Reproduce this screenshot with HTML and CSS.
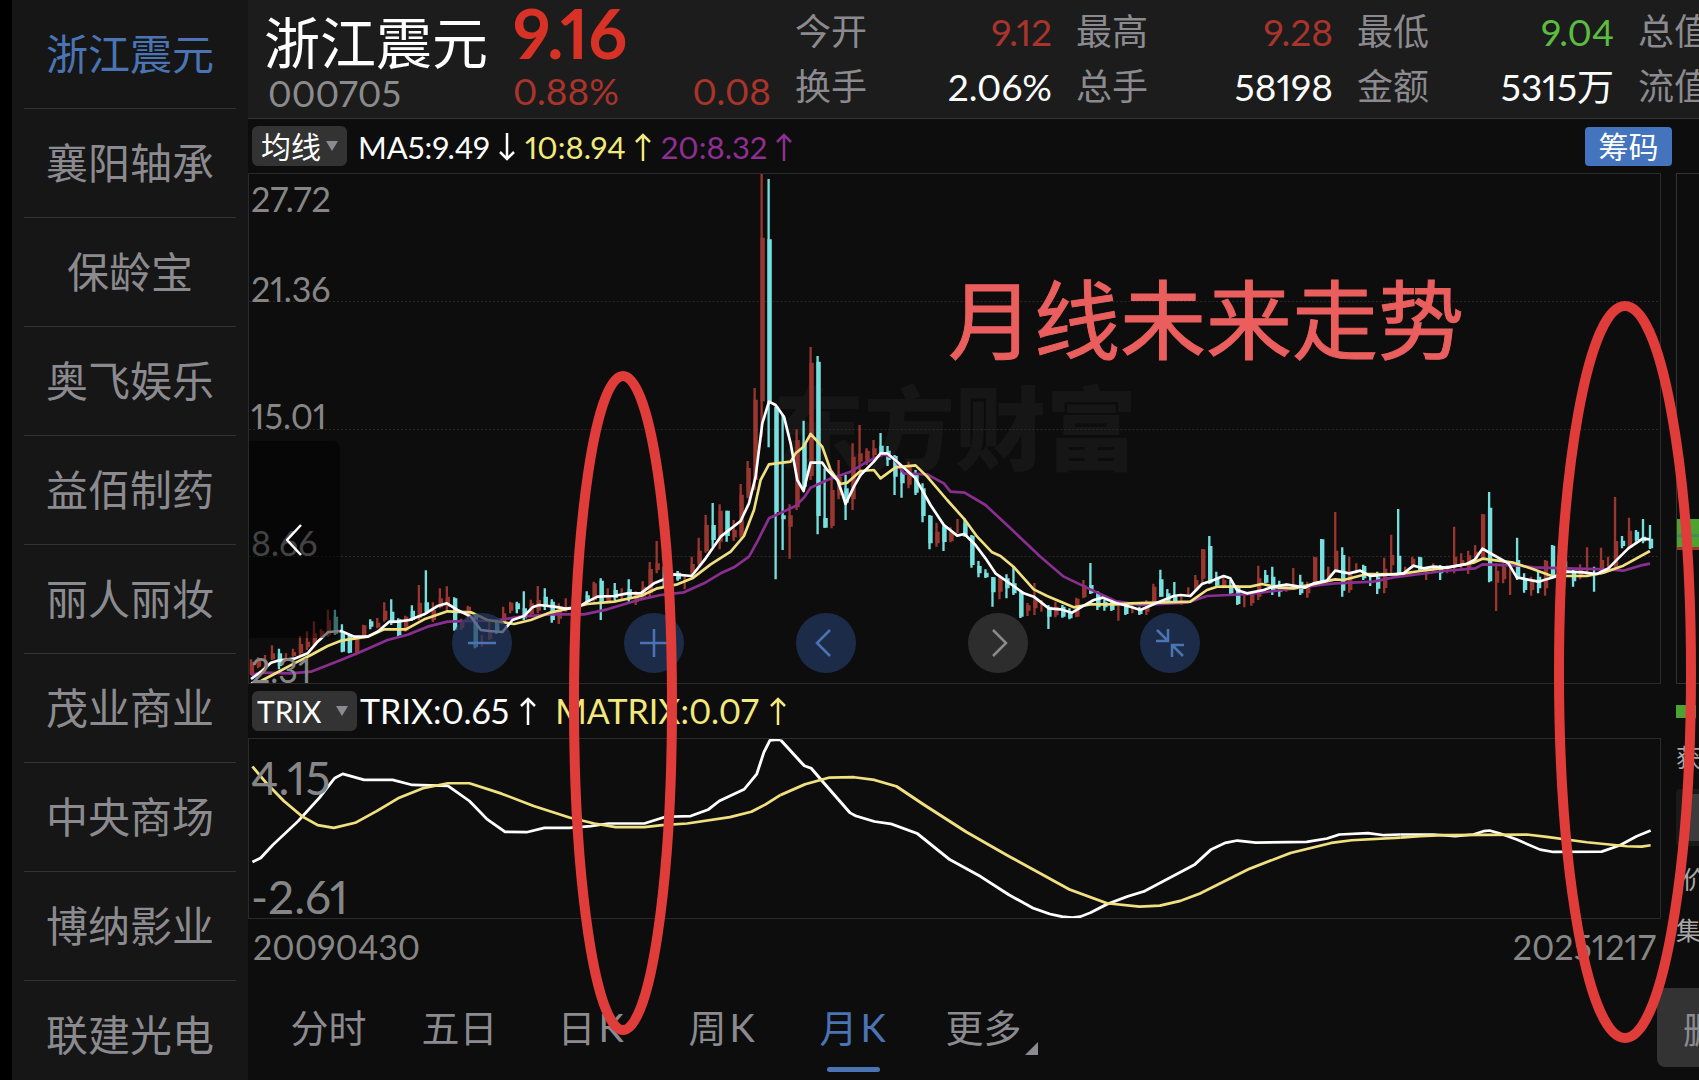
FILE: index.html
```html
<!DOCTYPE html>
<html lang="zh-CN">
<head>
<meta charset="utf-8">
<meta name="viewport" content="width=device-width, initial-scale=1">
<title>浙江震元 000705</title>
<link rel="stylesheet" href="styles.css">
</head>
<body>
<nav class="watchlist" aria-label="自选股">
  <a class="stock stock-active" href="#">浙江震元</a>
  <a class="stock" href="#">襄阳轴承</a>
  <a class="stock" href="#">保龄宝</a>
  <a class="stock" href="#">奥飞娱乐</a>
  <a class="stock" href="#">益佰制药</a>
  <a class="stock" href="#">丽人丽妆</a>
  <a class="stock" href="#">茂业商业</a>
  <a class="stock" href="#">中央商场</a>
  <a class="stock" href="#">博纳影业</a>
  <a class="stock" href="#">联建光电</a>
</nav>

<main class="quote">
  <header class="summary">
    <div class="ident">
      <h1 class="name">浙江震元</h1>
      <div class="code">000705</div>
    </div>
    <div class="price">
      <div class="last">9.16</div>
      <div class="change"><span>0.88%</span><span>0.08</span></div>
    </div>
    <dl class="stats">
      <div class="stat"><dt>今开</dt><dd class="up">9.12</dd></div>
      <div class="stat"><dt>最高</dt><dd class="up">9.28</dd></div>
      <div class="stat"><dt>最低</dt><dd class="down">9.04</dd></div>
      <div class="stat"><dt>总值</dt><dd></dd></div>
      <div class="stat"><dt>换手</dt><dd>2.06%</dd></div>
      <div class="stat"><dt>总手</dt><dd>58198</dd></div>
      <div class="stat"><dt>金额</dt><dd>5315万</dd></div>
      <div class="stat"><dt>流值</dt><dd></dd></div>
    </dl>
  </header>

  <div class="board">
    <section class="charts">
      <div class="legend">
        <label class="picker"><select class="picker-select picker-ma" aria-label="主图指标"><option>均线</option></select></label>
        <span class="reading white ma-first">MA5:9.49<svg class="arrow" viewBox="0 0 16 28"><path d="M8 0V26M1 19L8 26L15 19"/></svg></span>
        <span class="reading yellow">10:8.94<svg class="arrow" viewBox="0 0 16 28"><path d="M8 28V2M1 9L8 2L15 9"/></svg></span>
        <span class="reading purple">20:8.32<svg class="arrow" viewBox="0 0 16 28"><path d="M8 28V2M1 9L8 2L15 9"/></svg></span>
        <button class="chips" type="button">筹码</button>
      </div>

      <div class="plot plot-price">
        <div class="watermark">东方财富</div>
        <svg class="series" viewBox="248 174 1412 509" preserveAspectRatio="none" aria-hidden="true">
          <path class="grid" d="M248 301.5H1660M248 429.5H1660M248 556.5H1660"/>
          <g transform="translate(240 420) scale(.33333)">
            <path class="wick red" d="M30 718V765M51 712V745M72 705V750M93 676V720M135 700V720M156 686V710M177 648V705M198 634V690M219 604V680M240 628V660M261 569V650M346 650V706M367 614V655M409 594V625M430 547V605M493 587V635M534 495V600M576 547V606M597 505V565M618 499V575M661 596V630M681 557V600M723 645V680M745 605V660M787 560V610M808 545V580M870 539V590M891 498V580M954 550V612M975 535V575M1017 530V560M1059 485V545M1101 505V550M1143 505V540M1185 514V555M1206 484V535M1227 426V530M1248 363V460"/>
            <path class="body red" d="M33 725V762M54 722V740M96 700V718M159 696V708M180 672V700M201 665V682M222 640V676M243 632V646M264 600V646M349 655V702M370 616V652M412 608V622M433 572V600M496 590V632M537 548V594M579 570V600M600 535V562M621 530V560M664 600V624M684 560V590M748 630V656M790 580V608M811 548V572M873 550V582M894 540V572M957 570V596M1062 490V540M1104 525V546M1188 520V546M1209 500V530M1230 447V520M1251 430V450"/>
            <path class="wick cyan" d="M114 686V748M282 569V645M303 613V697M324 645V700M388 598V628M451 538V615M472 595V648M513 556V603M555 451V578M640 532V632M702 585V685M766 604V642M828 545V580M849 514V600M912 505V570M933 538V608M1038 514V550M1080 475V600M1122 489V540M1164 478V545M1269 440V500M1311 453V480"/>
            <path class="body cyan" d="M117 700V738M285 590V642M306 640V695M327 645V698M391 604V620M454 575V610M475 598V645M516 572V600M558 547V574M643 535V630M705 588V682M769 610V636M831 550V568M852 565V595M915 530V560M936 545V600M1041 526V546M1083 482V552M1125 510V534M1167 508V534M1314 458V474"/>
          </g>
          <g transform="translate(660 160) scale(.33333)">
            <path class="wick red" d="M72 1245V1288M93 1190V1245M114 1133V1215M135 1065V1178M177 1033V1168M219 1080V1143M240 972V1135M261 903V1015M282 684V990M303 42V830M387 1033V1196M408 808V1050M450 561V960M513 946V1105M534 900V1018M576 850V1050M597 795V930M618 865V915M639 840V900M744 905V985M828 1088V1160M870 1102V1147M891 1077V1120"/>
            <path class="body red" d="M96 1212V1240M117 1172V1210M138 1095V1174M180 1052V1145M222 1110V1132M243 1004V1128M264 924V1005M285 719V960M306 233V724M390 1066V1100M411 840V1042M453 608V948M516 990V1098M537 950V1006M579 890V1018M600 880V905M621 872V900M642 865V885M747 920V974M831 1115V1150M873 1118V1144"/>
            <path class="wick cyan" d="M51 1233V1262M156 1029V1160M198 1052V1145M324 57V862M345 740V1258M366 765V1170M429 782V990M471 588V1123M492 925V1103M555 945V1080M660 819V885M681 858V918M702 885V1005M723 925V1013M765 930V1005M786 970V1087M807 1065V1168M849 1095V1173M912 1075V1130M933 1125V1223M954 1203V1252M975 1228V1254"/>
            <path class="body cyan" d="M54 1240V1258M159 1095V1140M201 1052V1128M327 238V726M348 740V1056M369 1066V1078M432 850V980M474 605V1068M495 1074V1103M558 985V1028M663 857V880M684 872V900M705 888V950M726 940V970M768 945V998M789 985V1068M810 1067V1150M852 1100V1146M915 1090V1128M936 1127V1215M957 1218V1240M978 1238V1252"/>
          </g>
          <g transform="translate(940 420) scale(.33333)">
            <path class="wick red" d="M177 465V538M261 549V588M282 489V585M303 540V575M345 545V592M408 533V592M429 480V535M534 550V602M576 555V580M618 540V585M639 491V548M723 530V555M744 502V530M765 465V515M786 387V490M849 470V505M912 520V562M933 515V557M954 437V540M1038 490V515M1059 444V500M1101 495V533M1122 410V490M1164 440V480M1185 276V450"/>
            <path class="body red" d="M180 475V515M264 556V572M285 540V565M348 560V586M411 536V590M432 496V532M621 550V575M642 500V545M768 480V512M789 388V476M852 480V500M936 525V550M957 475V530M1125 412V488M1167 460V478M1188 392V450"/>
            <path class="wick cyan" d="M156 471V560M198 463V535M219 440V525M240 515V594M324 555V627M366 555V593M387 565V598M450 429V522M471 513V570M492 540V572M513 538V573M555 555V585M597 560V585M660 449V530M681 507V545M702 486V545M807 348V492M828 455V500M870 480V522M891 495V555M975 450V490M996 440V525M1017 482V530M1080 464V525M1143 357V485"/>
            <path class="body cyan" d="M159 472V517M201 475V505M222 490V520M243 518V590M327 560V590M369 560V590M390 575V595M453 495V520M474 520V562M495 545V562M516 545V570M558 560V582M600 565V582M663 478V530M684 520V545M705 530V545M810 378V490M831 470V495M873 495V520M894 500V552M978 465V488M999 470V510M1020 500V515M1083 485V520M1146 358V482"/>
          </g>
          <g transform="translate(1300 440) scale(.33333)">
            <path class="wick red" d="M21 425V472M84 380V425M147 350V458M168 370V400M252 353V460M273 284V400M315 380V405M336 350V385M378 385V420M399 370V395M441 375V400M462 260V400M483 340V385M504 332V402M525 315V365M546 222V360M588 370V513M609 370V430M630 375V465M693 410V467M735 360V467M777 350V400M840 373V418M861 322V405M903 323V405M924 350V385M945 171V385M987 233V325"/>
            <path class="body red" d="M24 440V460M150 402V450M255 386V444M276 345V376M339 356V380M465 350V380M486 360V378M507 346V385M528 335V360M549 223V358M591 392V428M612 380V418M696 425V450M738 362V445M843 388V412M906 360V400M948 303V380M990 272V322"/>
            <path class="wick cyan" d="M126 322V470M189 374V420M210 400V438M231 395V462M294 207V405M357 350V395M420 375V420M567 156V427M651 293V420M672 400V458M714 395V460M756 315V410M798 362V400M819 390V440M882 380V455M966 288V325M1008 270V305M1029 237V310M1050 255V327"/>
            <path class="body cyan" d="M129 345V452M192 378V415M234 412V446M297 347V402M360 352V392M423 380V400M570 203V424M654 360V410M675 420V450M717 410V445M759 317V408M822 395V424M969 302V318M1011 275V300M1032 290V304M1053 296V325"/>
          </g>
          <g transform="translate(240 420) scale(.33333)">
            <polyline class="line purple3" points="30,765 60,758 150,760 210,755 300,720 360,695 440,660 500,644 560,620 620,605 700,603 760,602 840,590 930,583 1030,583 1100,568 1200,538 1260,525 1330,517 1390,490 1440,460 1480,442 1525,410 1550,365 1585,295 1665,258 1690,233 1710,203 1760,180 1830,155 1880,125 1930,103 1960,115 1990,160 2060,163 2110,190 2130,215 2172,218 2235,255 2310,325 2400,410 2470,470 2550,508 2625,543 2700,555 2840,548 2900,528 3030,522 3180,503 3240,495 3285,490 3400,485 3460,472 3610,453 3705,445 3727,433 3840,437 3880,442 3980,445 4100,448 4150,452 4200,437 4230,431"/>
            <polyline class="line yellow3" points="30,790 60,783 100,762 160,730 210,705 260,678 300,662 380,650 430,628 495,628 550,598 620,574 690,577 740,600 820,612 870,600 930,577 980,567 1040,552 1120,545 1200,528 1250,505 1310,493 1355,475 1410,433 1470,395 1510,348 1540,270 1560,180 1585,133 1650,125 1665,100 1689,80 1710,42 1745,80 1770,150 1800,192 1820,188 1860,153 1900,150 1920,175 1965,142 2025,136 2060,170 2120,240 2172,298 2210,350 2255,397 2280,408 2319,440 2380,508 2420,528 2500,562 2550,553 2625,553 2670,550 2750,548 2850,545 2900,510 2930,500 3030,500 3065,492 3110,502 3160,505 3230,490 3285,478 3310,480 3380,462 3470,463 3540,453 3620,443 3700,428 3727,416 3820,428 3880,448 3935,468 4040,468 4090,458 4150,437 4230,393"/>
            <polyline class="line white3" points="30,777 60,755 90,728 110,722 160,716 200,700 230,665 262,636 300,633 340,650 380,650 410,635 445,605 470,605 505,600 550,583 590,558 618,550 650,570 690,590 720,630 745,633 785,636 815,600 850,588 875,562 895,555 940,560 975,566 1010,562 1040,545 1070,530 1120,528 1160,520 1200,520 1240,490 1270,478 1300,463 1353,468 1395,415 1440,350 1500,303 1525,250 1545,170 1565,10 1585,-55 1605,-45 1630,-10 1650,70 1670,180 1689,213 1710,128 1745,128 1760,150 1790,180 1805,220 1815,252 1840,200 1860,165 1900,125 1920,100 1940,100 1970,125 2025,175 2070,255 2110,315 2150,347 2172,342 2205,375 2235,415 2265,460 2315,495 2350,520 2380,530 2425,565 2460,568 2495,578 2525,560 2560,540 2587,533 2625,548 2670,560 2700,570 2750,548 2800,528 2820,525 2850,528 2885,492 2920,480 2950,468 2970,475 2990,510 3020,520 3070,510 3100,500 3140,494 3195,503 3220,490 3260,482 3285,452 3327,460 3360,452 3390,468 3430,465 3490,460 3520,437 3550,445 3580,440 3620,443 3680,432 3705,418 3727,386 3760,405 3805,430 3830,472 3895,485 3940,472 3980,455 4030,457 4070,462 4105,445 4140,410 4165,385 4208,356 4230,358"/>
          </g>
        </svg>
        <div class="scale">
          <span>27.72</span><span>21.36</span><span>15.01</span><span>8.66</span><span>2.31</span>
        </div>
        <button class="drawer" type="button" aria-label="展开"><svg viewBox="0 0 16 32"><path d="M15 1L1 16L15 31"/></svg></button>
        <div class="controls">
          <button class="round" type="button" aria-label="缩小"><svg viewBox="0 0 60 60"><path d="M16 30H44"/></svg></button>
          <button class="round" type="button" aria-label="放大"><svg viewBox="0 0 60 60"><path d="M16 30H44M30 16V44"/></svg></button>
          <button class="round" type="button" aria-label="左移"><svg viewBox="0 0 60 60"><path d="M34 17L21 30L34 43"/></svg></button>
          <button class="round round-off" type="button" aria-label="右移"><svg viewBox="0 0 60 60"><path d="M25 17L38 30L25 43"/></svg></button>
          <button class="round" type="button" aria-label="收起"><svg viewBox="0 0 60 60"><path d="M17 17L28 28M28 16V28H16M43 43L32 32M32 44V32H44"/></svg></button>
        </div>
      </div>

      <div class="legend">
        <label class="picker"><select class="picker-select picker-trix" aria-label="副图指标"><option>TRIX</option></select></label>
        <span class="reading reading-sub white">TRIX:0.65<svg class="arrow" viewBox="0 0 16 28"><path d="M8 28V2M1 9L8 2L15 9"/></svg></span>
        <span class="reading reading-sub yellow">MATRIX:0.07<svg class="arrow" viewBox="0 0 16 28"><path d="M8 28V2M1 9L8 2L15 9"/></svg></span>
      </div>

      <div class="plot plot-trix">
        <svg class="series" viewBox="248 740 1412 178" preserveAspectRatio="none" aria-hidden="true">
          <g transform="translate(240 690) scale(.35714 .33333)">
            <polyline class="line white3" points="32,517 55,505 90,465 160,395 220,325 262,267 285,254 345,272 425,272 480,287 580,290 640,335 690,390 740,427 800,428 850,415 920,415 980,410 1030,402 1130,402 1190,382 1260,380 1310,360 1340,335 1410,300 1445,255 1465,190 1482,154 1505,152 1512,153"/>
            <polyline class="line yellow3" points="32,232 70,280 120,335 170,380 215,407 260,415 320,400 380,365 440,327 510,297 580,282 640,282 730,313 820,350 920,384 990,402 1050,413 1130,413 1180,407 1250,402 1370,383 1430,367 1470,345 1512,317"/>
          </g>
          <g transform="translate(780 700) scale(.40816 .33333)">
            <polyline class="line white3" points="0,123 58,200 75,207 105,250 170,340 185,350 230,366 270,373 335,402 415,480 490,530 560,585 620,625 660,642 690,650 715,653 735,650 760,638 800,613 850,590 890,575 1015,495 1055,450 1090,430 1120,423 1165,429 1290,427 1340,417 1370,405 1440,401 1480,407 1519,405"/>
            <polyline class="line yellow3" points="0,287 60,255 120,235 180,234 230,242 285,262 350,315 455,397 560,470 710,570 800,610 880,620 930,617 980,603 1030,580 1150,507 1250,460 1350,430 1400,422 1519,414"/>
          </g>
          <g transform="translate(1400 700) scale(.33333)">
            <polyline class="line white3" points="0,405 100,405 165,410 220,405 250,395 268,393 300,402 350,420 420,450 460,457 605,456 660,437 710,410 752,393"/>
            <polyline class="line yellow3" points="0,414 60,410 130,407 380,405 440,412 560,428 680,440 725,441 752,437"/>
          </g>
        </svg>
        <div class="scale scale-trix"><span>4.15</span><span>-2.61</span></div>
      </div>

      <div class="dates"><time>20090430</time><time>20251217</time></div>
    </section>

    <aside class="distribution" aria-label="筹码分布">
      <div class="profile"><div class="band"></div></div>
      <div class="mark"></div>
      <div class="gain">获利</div>
      <div class="slider"><div class="slider-fill"></div></div>
      <div class="note note-in">价格</div>
      <div class="note">集中</div>
    </aside>
  </div>

  <footer class="periods">
    <button class="tab" type="button">分时</button>
    <button class="tab" type="button">五日</button>
    <button class="tab" type="button">日<span class="unit">K</span></button>
    <button class="tab" type="button">周<span class="unit">K</span></button>
    <button class="tab tab-active" type="button">月<span class="unit">K</span></button>
    <button class="tab tab-more" type="button">更多</button>
    <button class="remove" type="button">删自选</button>
  </footer>
</main>

<div class="caption">月线未来走势</div>
<svg class="markup" aria-hidden="true">
  <ellipse cx="623" cy="703" rx="49" ry="327"/>
  <ellipse cx="1625" cy="672" rx="66" ry="366"/>
</svg>
</body>
</html>
```
FILE: styles.css
```css
* { box-sizing: border-box; }

body {
  margin: 0;
  display: flex;
  position: relative;
  height: 100vh;
  overflow: hidden;
  background: #000;
  color: #fff;
  font-family: Lato, "Noto Sans CJK SC", sans-serif;
  font-variant-numeric: proportional-nums;
}

button, select {
  margin: 0;
  padding: 0;
  border: 0;
  background: none;
  color: inherit;
  font: inherit;
}

.red { stroke: #98362f; }
.cyan { stroke: #76dfdf; }
.white { color: #fff; }
.yellow { color: #f3e87c; }
.purple { color: #8e2f92; }

/* Watchlist */
.watchlist {
  flex: none;
  width: 236px;
  margin-left: 12px;
  padding: 0 12px;
  overflow: hidden;
  background: #161616;
}
.stock {
  display: block;
  height: 109px;
  border-bottom: 1px solid #333;
  color: #8b8b8f;
  font-size: 42px;
  line-height: 108px;
  text-align: center;
  text-decoration: none;
  white-space: nowrap;
}
.stock-active { color: #4a74b4; }

/* Quote header */
.quote {
  flex: 1;
  min-width: 0;
  display: flex;
  flex-direction: column;
  overflow: hidden;
  background: #0d0d0d;
}
.summary {
  display: flex;
  height: 119px;
  border-bottom: 1px solid #333;
  background: #1c1c1c;
}
.ident { flex: none; width: 265px; padding: 11px 0 0 16px; }
.name { margin: 0; font-size: 56px; font-weight: 400; line-height: 64px; }
.code { padding-left: 4px; color: #8b8b8b; font-size: 36px; line-height: 36px; }
.price { flex: none; width: 258px; color: #a8342c; }
.last { height: 66px; color: #d83226; font-size: 68px; font-weight: 700; line-height: 66px; }
.change { display: flex; justify-content: space-between; font-size: 37px; line-height: 50px; }
.stats {
  flex: none;
  display: grid;
  grid-template-columns: repeat(4, 257px);
  grid-auto-rows: 55px;
  gap: 0 24px;
  margin: 4px 0 0 24px;
}
.stat { display: flex; justify-content: space-between; line-height: 55px; }
.stat dt { color: #8b8b8f; font-size: 36px; }
.stat dd { margin: 0; font-size: 37px; }
.stat .up { color: #a8342c; }
.stat .down { color: #5cbc42; }

/* Charts */
.board { display: flex; gap: 15px; }
.charts { flex: 1; min-width: 0; }
.legend {
  display: flex;
  align-items: center;
  height: 54px;
  padding-left: 4px;
}
.picker { position: relative; display: block; }
.picker::after {
  content: "";
  position: absolute;
  right: 9px;
  top: 15px;
  border: 6px solid transparent;
  border-top: 10px solid #8b8b8f;
  border-bottom: 0;
  pointer-events: none;
}
.picker-select {
  display: block;
  height: 40px;
  border-radius: 6px;
  background: #333;
  appearance: none;
  color: #fff;
  font-size: 30px;
  line-height: 40px;
}
.picker-ma { width: 95px; padding-left: 9px; }
.picker-trix { width: 105px; padding-left: 5px; }
.reading {
  display: flex;
  align-items: center;
  gap: 9px;
  margin-right: 10px;
  padding-top: 2px;
  font-size: 31px;
  line-height: 40px;
}
.ma-first { margin-left: 11px; }
.reading-sub { margin-left: 3px; margin-right: 16px; padding-top: 0; font-size: 34px; gap: 11px; }
.arrow { width: 16px; height: 28px; fill: none; stroke: currentColor; stroke-width: 2.5; }
.chips {
  width: 87px;
  height: 39px;
  margin-left: auto;
  margin-right: -11px;
  border-radius: 4px;
  background: #4474bd;
  font-size: 30px;
  line-height: 38px;
}
.plot { position: relative; border: 1px solid #2a2a2a; }
.plot-price { height: 511px; }
.plot-trix { height: 181px; }
.series { position: absolute; inset: 0; width: 100%; height: 100%; }
.grid { fill: none; stroke: #2a2a2a; stroke-dasharray: 2 2; }
.wick { fill: none; stroke-width: 7; }
.body { fill: none; stroke-width: 13; }
.line { fill: none; stroke-width: 8; stroke-linejoin: round; }
.white3 { stroke: #fff; }
.yellow3 { stroke: #f0e080; }
.purple3 { stroke: #8a2f90; }
.watermark {
  position: absolute;
  left: 524px;
  top: 194px;
  color: #161616;
  font-size: 91px;
  font-weight: 900;
  line-height: 120px;
}
.scale {
  position: absolute;
  left: 2px;
  top: 7px;
  display: flex;
  flex-direction: column;
  color: #868686;
  font-size: 34px;
  line-height: 36px;
}
.scale span { flex: none; height: 127px; }
.scale span:nth-child(1) { height: 90px; }
.scale span:last-child { height: 36px; }
.scale-trix { top: 15px; font-size: 46px; line-height: 48px; }
.scale-trix span:nth-child(1) { height: 119px; }
.drawer {
  position: absolute;
  left: 0;
  top: 267px;
  width: 91px;
  height: 197px;
  padding: 0 37px;
  border-radius: 0 8px 8px 0;
  background: rgba(0, 0, 0, .5);
}
.drawer svg { display: block; width: 16px; height: 32px; fill: none; stroke: #fff; stroke-width: 2.5; }
.controls {
  position: absolute;
  left: 203px;
  bottom: 10px;
  display: flex;
  gap: 112px;
}
.round {
  width: 60px;
  height: 60px;
  border-radius: 50%;
  background: rgba(34, 56, 94, .72);
  color: #4a74b4;
}
.round-off { background: rgba(58, 58, 58, .72); color: #8b8b8b; }
.round svg { display: block; fill: none; stroke: currentColor; stroke-width: 2.5; }
.dates {
  display: flex;
  justify-content: space-between;
  padding: 5px 5px 0;
  color: #868686;
  font-size: 34px;
  line-height: 46px;
}

/* Chip distribution, cut by the window's edge */
.distribution { flex: none; width: 23px; padding-top: 54px; overflow: hidden; color: #a8a8a8; white-space: nowrap; }
.profile { height: 511px; padding-top: 345px; border: 1px solid #333; border-right: 0; }
.band {
  height: 31px;
  border-bottom: 3px solid #98362f;
  background: linear-gradient(#4ea232 15px, #478a5c 15px, #478a5c 18px, #4ea232 18px);
}
.mark { width: 20px; height: 13px; margin-top: 21px; background: #4ea232; }
.gain { margin-top: 21px; font-size: 25px; line-height: 36px; }
.slider { height: 57px; margin-top: 14px; padding: 5px 0 5px 9px; border-radius: 4px 0 0 4px; background: #1a1a1a; }
.slider-fill { height: 47px; background: #3c3c3c; }
.note { margin-top: 15px; font-size: 25px; line-height: 36px; }
.note-in { padding-left: 6px; }

/* Period tabs */
.periods { display: flex; align-items: flex-start; padding: 18px 0 0 15px; }
.tab {
  position: relative;
  width: 131px;
  height: 79px;
  color: #8b8b8f;
  font-size: 38px;
  line-height: 79px;
}
.unit { margin-left: 3px; }
.tab-active { color: #4a74b4; }
.tab-active::after {
  content: "";
  position: absolute;
  left: 40px;
  bottom: -5px;
  width: 53px;
  height: 5px;
  border-radius: 3px;
  background: #4a74b4;
}
.tab-more::after {
  content: "";
  position: absolute;
  right: 11px;
  bottom: 12px;
  border-left: 13px solid transparent;
  border-bottom: 13px solid #8b8b8f;
}
.remove {
  flex: none;
  width: 150px;
  height: 79px;
  margin-left: auto;
  margin-right: -108px;
  padding-left: 26px;
  border-radius: 8px;
  background: #333;
  color: #8b8b8f;
  font-size: 36px;
  text-align: left;
}

/* Hand-drawn notes over the screen */
.caption {
  position: absolute;
  left: 948px;
  top: 256px;
  color: #ea5f5e;
  font-size: 86px;
  font-weight: 400;
  line-height: 128px;
  white-space: nowrap;
  -webkit-text-stroke: 1px #ea5f5e;
}
.markup { position: absolute; inset: 0; width: 100%; height: 100%; fill: none; stroke: #df3c3a; stroke-width: 10; pointer-events: none; }
```
